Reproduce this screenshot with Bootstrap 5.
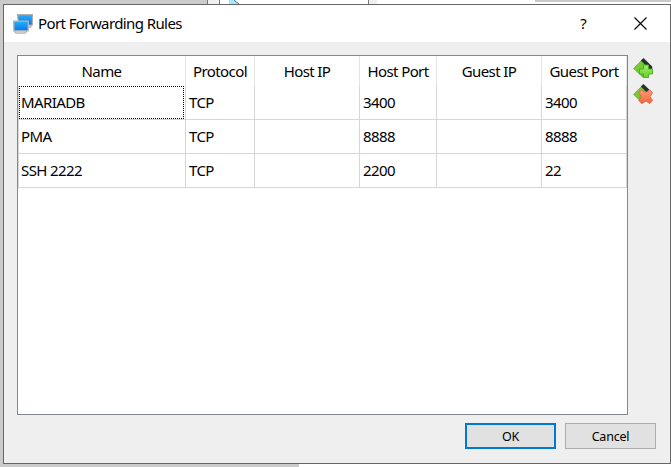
<!DOCTYPE html>
<html lang="en">
<head>
<meta charset="utf-8">
<title>Port Forwarding Rules</title>
<link href="https://cdn.jsdelivr.net/npm/bootstrap@5.3.0/dist/css/bootstrap.min.css" rel="stylesheet">
<style>
body{width:671px;height:467px;background:#fff;color:#000;font:15px/20px "Noto Sans","Open Sans",sans-serif;letter-spacing:-.6px}
.desk-top{height:4px}
.desk-a{width:208px;background:#cbcbcb;border-right:1px solid #777}
.desk-b{width:12px;background:#efefef;border-right:1px solid #777}
.desk-c{width:149px;border-right:1px solid #777;padding-left:9px}
.desk-d{width:8px;background:#efefef}
.desk-e{width:136px;height:2px;background:#c9c9c9}
.desk-left{width:3px;background:#cbcbcb}
.desk-bottom{width:299px;height:3px;background:#cbcbcb}
.dialog-win{width:668px;height:460px;border:1px solid #666;background:#efefef}
.title-bar{height:37px;padding:0 1px 0 9px}
.title-bar h1{font-size:15px;line-height:20px;font-weight:400;margin:0 0 1px 5px;letter-spacing:-.6px}
.win-btn{background:none;border:0;padding:0;width:57px;height:37px;color:#000}
.win-help{font-size:15px;padding-bottom:2px}
.rules-area{padding:13px 14px 0 13px}
.rules-box{width:611px;height:360px;border:1px solid #828790;background:#fff}
.rules-table{width:609px;table-layout:fixed;border-collapse:separate;border-spacing:0;margin:0}
.rules-table th{height:30px;padding:0;font-weight:400;text-align:center;border-right:1px solid #e4e4e4}
.rules-table td{height:34px;padding:0 0 2px 3px;border-right:1px solid #d6d6d6;border-bottom:1px solid #d6d6d6}
.rules-table td:first-child{border-left:1px solid #d6d6d6;padding-left:2px}
.rules-table .focus-cell{position:relative}
.focus-cell::after{content:"";position:absolute;inset:0 1px 0 0;border:1px dotted #000}
.side-tools{padding:3px 0 0 5px}
.side-tools button{width:20px;height:20px;padding:0;border:0;background:none;margin-bottom:6px;display:block}
.foot-bar{padding:8px 14px 0 0;gap:9px}
.dlg-btn{width:91px;height:26px;border:1px solid #adadad;background:#e1e1e1;color:#000;border-radius:0;padding:1px 0 0;font-size:12.5px;line-height:20px;letter-spacing:-.2px}
.dlg-btn.is-default{border:2px solid #0078d7}
svg{display:block}
</style>
</head>
<body class="overflow-hidden">
<div class="desk-top d-flex">
  <div class="desk-a"></div><div class="desk-b"></div>
  <div class="desk-c"><svg width="12" height="4"><path d="M0 0H5L10 4H0Z" fill="#a5e8fa"/><path d="M5 0L10 4" stroke="#4b6b94"/></svg></div>
  <div class="desk-d"></div><div class="desk-e ms-auto"></div>
</div>
<div class="d-flex">
  <div class="desk-left"></div>
  <main class="dialog-win">
    <header class="title-bar bg-white d-flex align-items-center">
      <svg width="20" height="20" viewBox="0 0 20 20">
        <defs><linearGradient id="scr" x2="0" y2="1"><stop stop-color="#2ab0f4"/><stop offset="1" stop-color="#0878ec"/></linearGradient></defs>
        <path d="M15 13.5H18L18.5 11H14Z" fill="#ccc" stroke="#b5b5b5" stroke-width=".8"/>
        <path d="M4.6.6H19.4V11H5.5Z" fill="url(#scr)" stroke="#adadad" stroke-width="1.2"/>
        <path d="M2.5 19.2H12.5L14.3 16.5H1Z" fill="#e0e0e0" stroke="#a8a8a8"/>
        <path d="M.7 7.2H15.2V16.8H.9Z" fill="url(#scr)" stroke="#b5b5b5" stroke-width="1.3"/>
      </svg>
      <h1>Port Forwarding Rules</h1>
      <button class="win-btn win-help ms-auto" aria-label="Help">?</button>
      <button class="win-btn d-flex align-items-center justify-content-center" aria-label="Close"><svg width="13" height="13" viewBox="0 0 13 13"><path d="M.5 .5L12.5 12.5M12.5 .5L.5 12.5" stroke="#000" stroke-width="1.1"/></svg></button>
    </header>
    <section class="rules-area d-flex">
      <div class="rules-box">
        <table class="rules-table">
          <colgroup><col style="width:168px"><col style="width:69px"><col style="width:105px"><col style="width:77px"><col style="width:105px"><col style="width:85px"></colgroup>
          <thead><tr><th>Name</th><th>Protocol</th><th>Host IP</th><th>Host Port</th><th>Guest IP</th><th>Guest Port</th></tr></thead>
          <tbody>
            <tr><td class="focus-cell">MARIADB</td><td>TCP</td><td></td><td>3400</td><td></td><td>3400</td></tr>
            <tr><td>PMA</td><td>TCP</td><td></td><td>8888</td><td></td><td>8888</td></tr>
            <tr><td>SSH 2222</td><td>TCP</td><td></td><td>2200</td><td></td><td>22</td></tr>
          </tbody>
        </table>
      </div>
      <div class="side-tools">
        <button aria-label="Add rule"><svg width="20" height="20" viewBox="0 0 20 20">
          <defs><linearGradient id="grn" x2="1" y2="1"><stop stop-color="#86dc3c"/><stop offset="1" stop-color="#4cb81a"/></linearGradient><linearGradient id="plus" x2="0" y2="1"><stop stop-color="#a6ee6a"/><stop offset="1" stop-color="#62d026"/></linearGradient><linearGradient id="red" x2="0" y2="1"><stop stop-color="#ff9c7c"/><stop offset="1" stop-color="#f5623e"/></linearGradient></defs>
          <path d="M.7 10.5L9.5 1.5L18.5 10.5L10 19.3Z" fill="url(#grn)" stroke="#648b38" stroke-width=".7"/>
          <path d="M.7 10.5L9 2" stroke="#d88052" stroke-dasharray="1.5 .7"/>
          <path d="M7.8 2.5L10.5.1L19.2 8.6V11.3H16.5Z" fill="#292e32"/>
          <path d="M10.5 7h5v4h4v5h-4v3.5h-5v-3.5h-4v-5h4z" fill="url(#plus)" stroke="#48ad20" stroke-width=".9" stroke-linejoin="round"/>
        </svg></button>
        <button aria-label="Remove rule"><svg width="20" height="20" viewBox="0 0 20 20">
          <path d="M.7 10.5L9.5 1.5L18.5 10.5L10 19.3Z" fill="url(#grn)" stroke="#648b38" stroke-width=".7"/>
          <path d="M.7 10.5L9 2" stroke="#d88052" stroke-dasharray="1.5 .7"/>
          <path d="M7.8 2.5L10.5.1L16.4 5.7L14 8.5Z" fill="#292e32"/>
          <path d="M5.8 8.7L8.6 5.8L12.8 8.5L16.8 5.8L19.5 8.7L17.1 12.7L19.5 16.6L16.8 19.5L12.8 17L8.6 19.5L5.8 16.6L8.3 12.7Z" fill="url(#red)" stroke="#df6040" stroke-width=".8" stroke-linejoin="round"/>
        </svg></button>
      </div>
    </section>
    <footer class="foot-bar d-flex justify-content-end">
      <button class="btn dlg-btn is-default">OK</button>
      <button class="btn dlg-btn">Cancel</button>
    </footer>
  </main>
</div>
<div class="desk-bottom"></div>
<script src="https://cdn.jsdelivr.net/npm/bootstrap@5.3.0/dist/js/bootstrap.bundle.min.js"></script>
</body>
</html>
